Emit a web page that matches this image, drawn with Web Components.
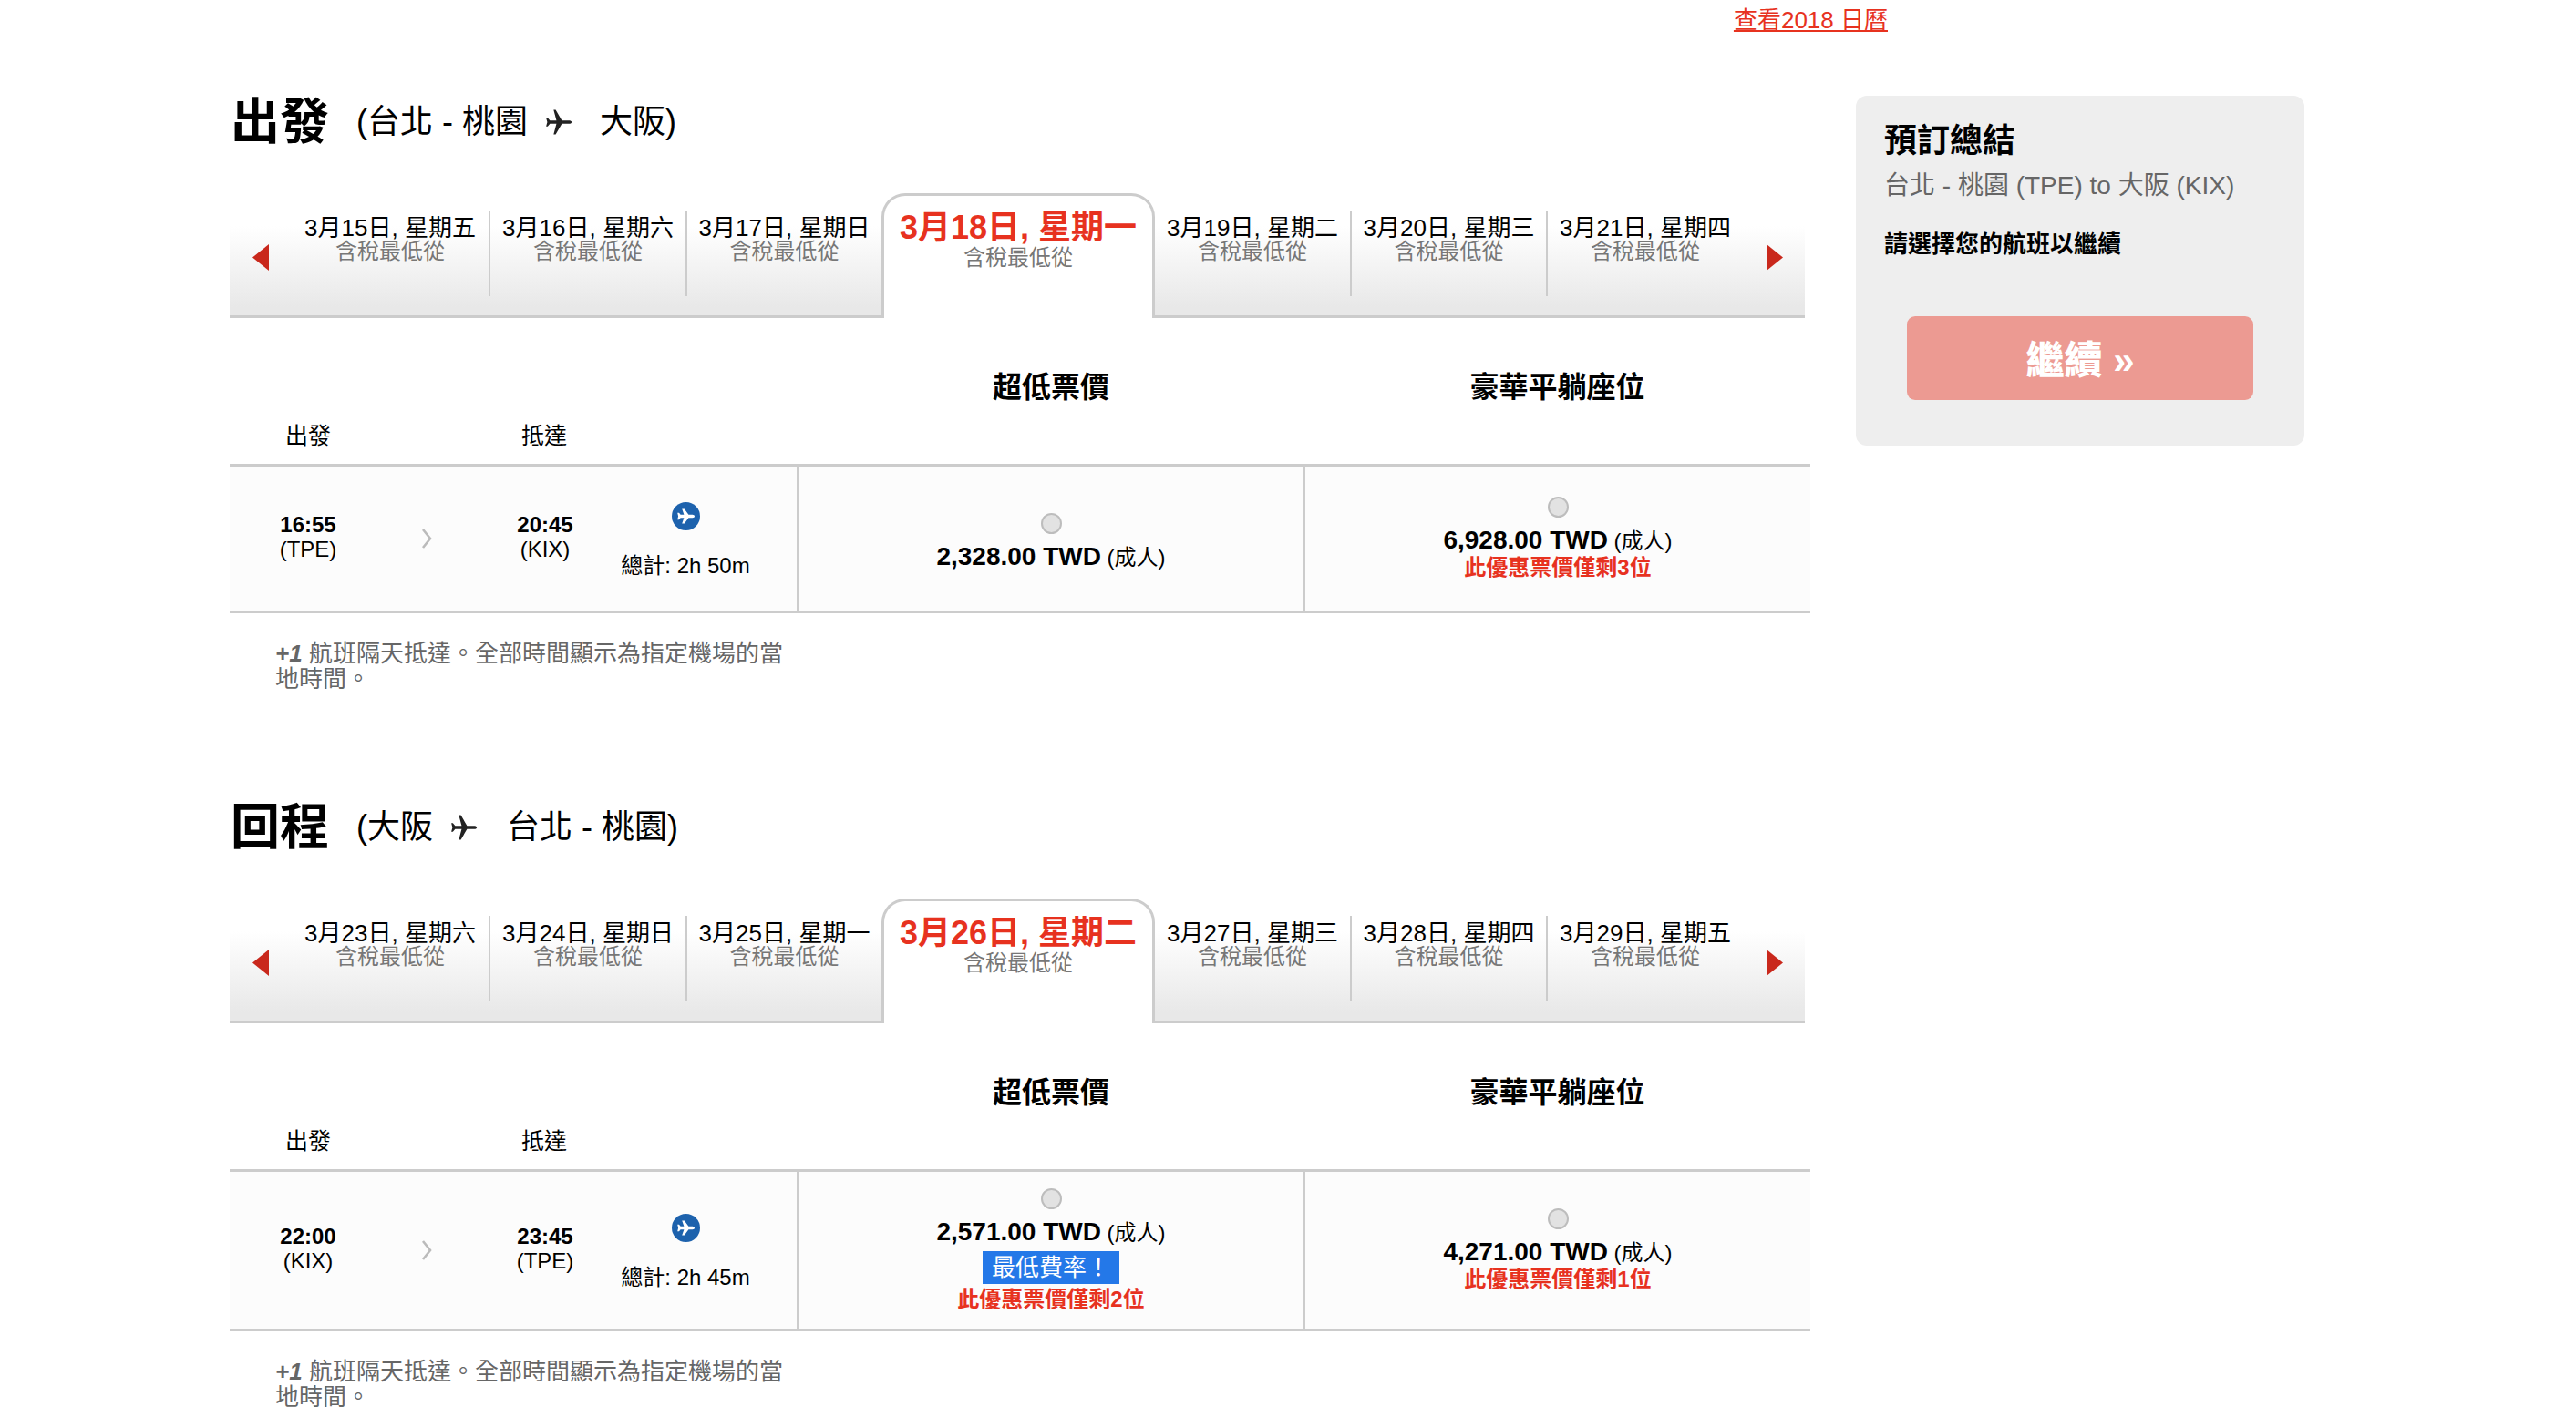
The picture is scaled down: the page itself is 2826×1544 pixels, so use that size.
<!DOCTYPE html>
<html lang="zh-Hant">
<head>
<meta charset="utf-8">
<title>選擇航班</title>
<style>
  html, body { margin:0; padding:0; background:#fff; overflow:hidden; }
  body { font-family:"Liberation Sans","Noto Sans CJK TC",sans-serif; color:#000; height:1544px; }
</style>
</head>
<body>
<booking-layout>
  <a slot="top" href="#">查看2018 日曆</a>

  <flight-section slot="main" heading="出發" from="(台北 - 桃園" to="大阪)" gap-after="28">
    <date-tabs slot="tabs">
      <date-tab style="--w:218px" sep day="3月15日, 星期五"></date-tab>
      <date-tab style="--w:216px" sep day="3月16日, 星期六"></date-tab>
      <date-tab style="--w:213px" day="3月17日, 星期日"></date-tab>
      <date-tab style="--w:300px" selected day="3月18日, 星期一"></date-tab>
      <date-tab style="--w:216px" sep day="3月19日, 星期二"></date-tab>
      <date-tab style="--w:215px" sep day="3月20日, 星期三"></date-tab>
      <date-tab style="--w:214px" day="3月21日, 星期四"></date-tab>
    </date-tabs>
    <flight-row slot="row" dep="16:55" dep-code="(TPE)" arr="20:45" arr-code="(KIX)" total="總計: 2h 50m">
      <fare-cell price="2,328.00 TWD"></fare-cell>
      <fare-cell price="6,928.00 TWD" left="此優惠票價僅剩3位"></fare-cell>
    </flight-row>
  </flight-section>

  <flight-section slot="main" heading="回程" from="(大阪" to="台北 - 桃園)" gap-after="30">
    <date-tabs slot="tabs">
      <date-tab style="--w:218px" sep day="3月23日, 星期六"></date-tab>
      <date-tab style="--w:216px" sep day="3月24日, 星期日"></date-tab>
      <date-tab style="--w:213px" day="3月25日, 星期一"></date-tab>
      <date-tab style="--w:300px" selected day="3月26日, 星期二"></date-tab>
      <date-tab style="--w:216px" sep day="3月27日, 星期三"></date-tab>
      <date-tab style="--w:215px" sep day="3月28日, 星期四"></date-tab>
      <date-tab style="--w:214px" day="3月29日, 星期五"></date-tab>
    </date-tabs>
    <flight-row slot="row" dep="22:00" dep-code="(KIX)" arr="23:45" arr-code="(TPE)" total="總計: 2h 45m">
      <fare-cell price="2,571.00 TWD" badge="最低費率！" left="此優惠票價僅剩2位"></fare-cell>
      <fare-cell price="4,271.00 TWD" left="此優惠票價僅剩1位"></fare-cell>
    </flight-row>
  </flight-section>

  <booking-summary slot="side"></booking-summary>
</booking-layout>

<script>
const FONT = `"Liberation Sans","Noto Sans CJK TC",sans-serif`
const PLANE = "M22 12c0-.9-1.2-1.3-2.2-1.3h-5.4L9.6 2.5H8l2.2 8.2H5.2L3.4 8.6H2.2l.9 3.4-.9 3.4h1.2l1.8-2.1h5L8 21.5h1.6l4.8-8.2h5.4c1 0 2.2-.4 2.2-1.3z"
const PLANE_FAT = "M25 15.5c0-1-1-1.7-2.4-1.7h-4.2l-4.6-6.4h-2.6l2.2 6.4H9.6L8 11.7H6.2l.9 3.8-.9 3.8H8l1.6-2.1h3.8l-2.2 6.4h2.6l4.6-6.4h4.2c1.4 0 2.4-.7 2.4-1.7z"

class BookingLayout extends HTMLElement {
  connectedCallback() {
    const shadowRoot = this.attachShadow({ mode: "open" })
    shadowRoot.innerHTML = `
      <style>
        :host { display:block; height:1544px; overflow:hidden; font-family:${FONT}; }
        .top { display:flex; justify-content:flex-end; padding-right:755px; height:44px; line-height:44px; font-size:26px; }
        ::slotted(a) { color:#e7321f; text-decoration:underline; }
        .cols { display:flex; align-items:flex-start; padding-left:252px; }
        .main { width:1734px; padding-top:62px; }
        .side { width:492px; margin-left:50px; padding-top:61px; }
      </style>
      <div class="top"><slot name="top"></slot></div>
      <div class="cols">
        <div class="main"><slot name="main"></slot></div>
        <div class="side"><slot name="side"></slot></div>
      </div>
    `
  }
}

class FlightSection extends HTMLElement {
  connectedCallback() {
    const shadowRoot = this.attachShadow({ mode: "open" })
    shadowRoot.innerHTML = `
      <style>
        :host { display:block; margin-bottom:121px; }
        .head { display:flex; align-items:center; height:56px; padding-left:1px; }
        h1 { margin:0 30px 0 0; font-size:54px; line-height:56px; font-weight:bold; }
        .route { font-size:36px; line-height:56px; white-space:nowrap; }
        svg { width:34px; height:34px; margin:0 ${this.getAttribute("gap-after")}px 0 17px; flex:none; }
        .tabs { margin-top:50px; }
        .fares, .labels { display:grid; grid-template-columns:623px 556px 555px; }
        .fares { margin-top:56px; font-size:32px; line-height:40px; font-weight:bold; text-align:center; }
        .labels { grid-template-columns:172px 88px 170px; margin-top:20px; height:44px; font-size:25px; line-height:27px; text-align:center; }
        .note { width:570px; margin:30px 0 0 50px; font-size:26px; line-height:28px; color:#666; }
        .note b { font-style:italic; }
      </style>
      <div class="head">
        <h1>${this.getAttribute("heading")}</h1>
        <span class="route">${this.getAttribute("from")}</span>
        <svg viewBox="0 0 24 24"><path d="${PLANE}" fill="#222"/></svg>
        <span class="route">${this.getAttribute("to")}</span>
      </div>
      <div class="tabs"><slot name="tabs"></slot></div>
      <div class="fares"><span></span><span>超低票價</span><span>豪華平躺座位</span></div>
      <div class="labels"><span>出發</span><span></span><span>抵達</span></div>
      <slot name="row"></slot>
      <div class="note"><b>+1</b> 航班隔天抵達。全部時間顯示為指定機場的當<br>地時間。</div>
    `
  }
}

class DateTabs extends HTMLElement {
  connectedCallback() {
    const shadowRoot = this.attachShadow({ mode: "open" })
    shadowRoot.innerHTML = `
      <style>
        :host { display:block; width:1728px; }
        .bar { display:flex; height:134px; border-bottom:3px solid #ccc; background:linear-gradient(#fff 36px, #e8e8e8 125px); }
        .arrow { flex:none; width:68px; display:flex; align-items:center; justify-content:center; padding-top:6px; box-sizing:border-box; }
        svg { width:19px; height:29px; }
      </style>
      <div class="bar">
        <div class="arrow"><svg viewBox="0 0 19 29"><path d="M18 0v29L0 14.5z" fill="#c9281c"/></svg></div>
        <slot></slot>
        <div class="arrow"><svg viewBox="0 0 19 29"><path d="M1 0v29l18-14.5z" fill="#c9281c"/></svg></div>
      </div>
    `
  }
}

class DateTab extends HTMLElement {
  connectedCallback() {
    const shadowRoot = this.attachShadow({ mode: "open" })
    shadowRoot.innerHTML = `
      <style>
        :host { display:block; flex:none; width:var(--w); box-sizing:border-box; height:94px; margin-top:19px; padding-top:6px; text-align:center; white-space:nowrap; }
        :host([sep]) { border-right:2px solid #ccc; }
        :host([selected]) { height:137px; margin-top:0; padding-top:17px; background:#fff; border:3px solid #ccc; border-bottom:none; border-radius:26px 26px 0 0; }
        .day { font-size:26px; line-height:26px; }
        :host([selected]) .day { font-size:36px; line-height:36px; font-weight:bold; color:#e7321f; }
        .from { font-size:24px; line-height:26px; color:#777; }
        :host([selected]) .from { margin-top:2px; }
      </style>
      <div class="day">${this.getAttribute("day")}</div>
      <div class="from">含稅最低從</div>
    `
  }
}

class FlightRow extends HTMLElement {
  connectedCallback() {
    const a = n => this.getAttribute(n)
    const shadowRoot = this.attachShadow({ mode: "open" })
    shadowRoot.innerHTML = `
      <style>
        :host { display:grid; grid-template-columns:624px 556px 554px; min-height:158px; background:#fcfcfc; border-top:3px solid #ccc; border-bottom:3px solid #ccc; }
        .info { display:grid; grid-template-columns:172px 88px 172px 136px; align-items:center; text-align:center; border-right:2px solid #ccc; }
        .time { font-size:24px; line-height:27px; padding-bottom:4px; }
        .time b { display:block; }
        .chev { display:flex; justify-content:center; }
        .chev svg { width:12px; height:22px; }
        .total { display:flex; flex-direction:column; align-items:center; gap:25px; padding-top:4px; font-size:24px; line-height:28px; white-space:nowrap; }
        .total svg { width:31px; height:31px; display:block; }
        ::slotted(fare-cell:last-child) { border-right:none; }
      </style>
      <div class="info">
        <div class="time"><b>${a("dep")}</b>${a("dep-code")}</div>
        <div class="chev"><svg viewBox="0 0 12 22"><path d="M2 1l8 10-8 10" fill="none" stroke="#bbb" stroke-width="2.6"/></svg></div>
        <div class="time"><b>${a("arr")}</b>${a("arr-code")}</div>
        <div class="total">
          <svg viewBox="0 0 31 31"><circle cx="15.5" cy="15.5" r="15.5" fill="#1d62ad"/><path d="${PLANE_FAT}" fill="#fff"/></svg>
          <span>${a("total")}</span>
        </div>
      </div>
      <slot></slot>
    `
  }
}

class FareCell extends HTMLElement {
  connectedCallback() {
    const badge = this.getAttribute("badge")
    const left = this.getAttribute("left")
    const shadowRoot = this.attachShadow({ mode: "open" })
    shadowRoot.innerHTML = `
      <style>
        :host { display:flex; flex-direction:column; align-items:center; justify-content:center; box-sizing:border-box; padding:18px 0 10px; border-right:2px solid #ccc; white-space:nowrap; }
        .radio { width:23px; height:23px; box-sizing:border-box; border-radius:50%; background:#e2e2e2; border:2px solid #bdbdbd; margin-bottom:10px; }
        .price { font-size:24px; line-height:30px; }
        .price b { font-size:28px; }
        .badge { margin:5px 0 3px; width:150px; height:36px; background:#2478e8; color:#fff; font-size:26px; line-height:36px; text-align:center; }
        .left { font-size:24px; line-height:28px; margin-bottom:8px; font-weight:bold; color:#e7321f; }
      </style>
      <div class="radio"></div>
      <div class="price"><b>${this.getAttribute("price")}</b> (成人)</div>
      ${badge ? `<div class="badge">${badge}</div>` : ""}
      ${left ? `<div class="left">${left}</div>` : ""}
    `
  }
}

class BookingSummary extends HTMLElement {
  connectedCallback() {
    const shadowRoot = this.attachShadow({ mode: "open" })
    shadowRoot.innerHTML = `
      <style>
        :host { display:block; box-sizing:border-box; height:384px; padding:28px 31px 0; background:#eee; border-radius:12px; }
        h2 { margin:0; font-size:36px; line-height:44px; font-weight:bold; }
        .route { margin-top:10px; font-size:28px; line-height:34px; color:#666; white-space:nowrap; }
        .hint { margin-top:30px; font-size:26px; line-height:34px; font-weight:bold; }
        .go { display:flex; align-items:center; justify-content:center; gap:10px; box-sizing:border-box; margin:62px 25px 0; height:92px; padding-bottom:4px; background:#ec9a92; border-radius:9px; color:#fff; font-size:42px; font-weight:900; }
      </style>
      <h2>預訂總結</h2>
      <div class="route">台北 - 桃園 (TPE) to 大阪 (KIX)</div>
      <div class="hint">請選擇您的航班以繼續</div>
      <div class="go">繼續 »</div>
    `
  }
}

customElements.define("booking-layout", BookingLayout)
customElements.define("flight-section", FlightSection)
customElements.define("date-tabs", DateTabs)
customElements.define("date-tab", DateTab)
customElements.define("flight-row", FlightRow)
customElements.define("fare-cell", FareCell)
customElements.define("booking-summary", BookingSummary)
</script>
</body>
</html>
